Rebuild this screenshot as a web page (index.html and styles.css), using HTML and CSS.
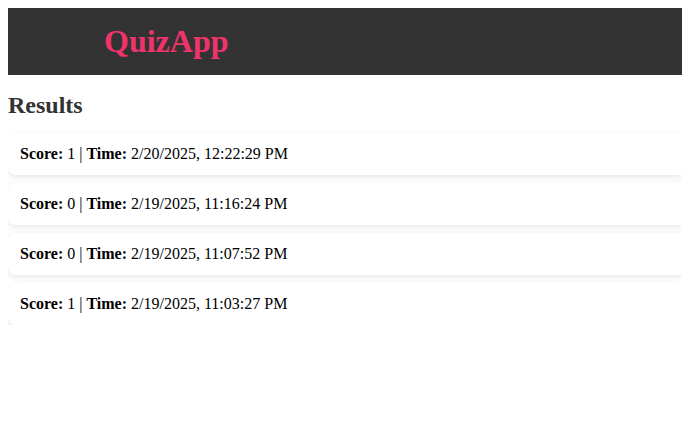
FILE: index.html
```html
<!DOCTYPE html>
<html>
<head>
<meta charset="utf-8">
<link rel="stylesheet" href="styles.css">
</head>
<body>
<header class="topbar">
  <h1 class="logo">QuizApp</h1>
</header>
<main class="results">
  <h2 class="results-title">Results</h2>
  <div class="result-list">
    <div class="result-card"><strong>Score:</strong> 1 | <strong>Time:</strong> 2/20/2025, 12:22:29 PM</div>
    <div class="result-card"><strong>Score:</strong> 0 | <strong>Time:</strong> 2/19/2025, 11:16:24 PM</div>
    <div class="result-card"><strong>Score:</strong> 0 | <strong>Time:</strong> 2/19/2025, 11:07:52 PM</div>
    <div class="result-card"><strong>Score:</strong> 1 | <strong>Time:</strong> 2/19/2025, 11:03:27 PM</div>
  </div>
</main>
</body>
</html>
```

FILE: styles.css
```css
body {
  margin: 8px 0 8px 8px;
  font-family: "Liberation Serif", "Times New Roman", serif;
  font-size: 16px;
  color: #000;
  background: #fff;
}
.topbar {
  background: #333333;
  height: 67px;
  display: flex;
  align-items: center;
  padding-left: 96px;
}
.logo {
  margin: 0;
  font-size: 32px;
  font-weight: bold;
  color: #f0336a;
}
.results-title {
  margin: 16px 0 14px;
  font-size: 24px;
  font-weight: bold;
  color: #333;
  line-height: 28px;
}
.result-list {
  display: flex;
  flex-direction: column;
  gap: 8px;
}
.result-card {
  padding: 12px;
  line-height: 18px;
  background: #fff;
  border-radius: 8px 0 0 8px;
  box-shadow: 0 2px 6px rgba(0, 0, 0, 0.1);
}
```
